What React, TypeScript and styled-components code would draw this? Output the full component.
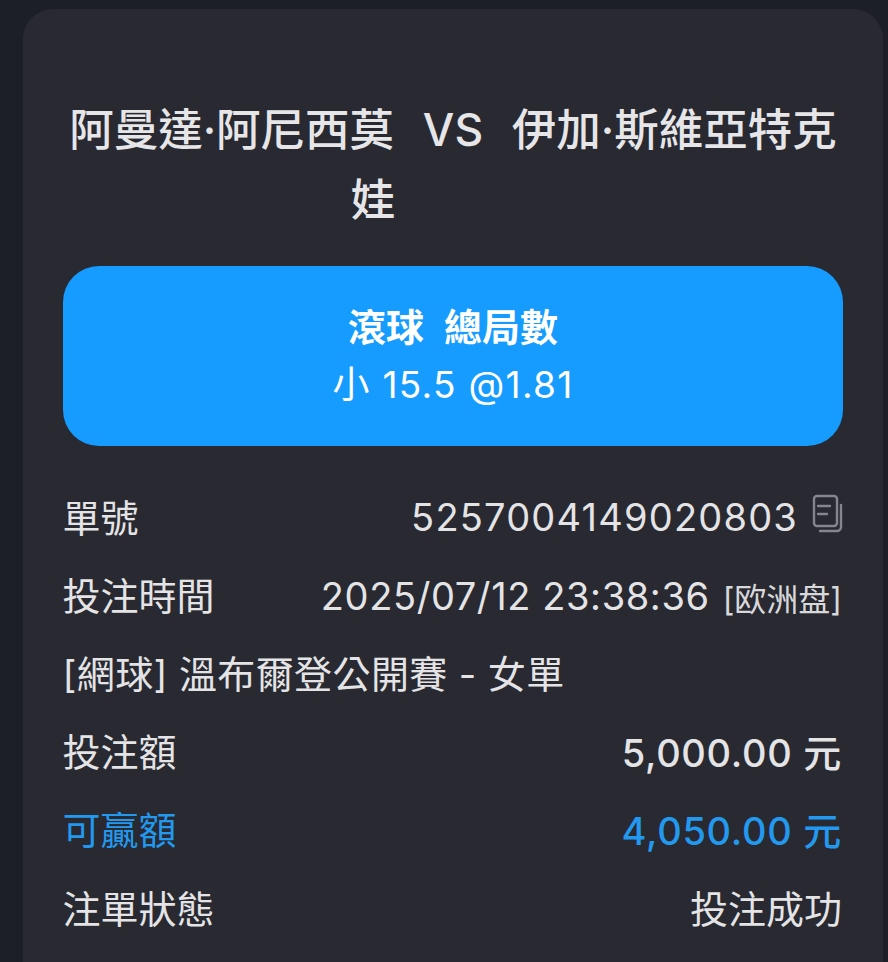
import React from 'react';
import styled, { createGlobalStyle } from 'styled-components';

const GlobalStyle = createGlobalStyle`
    html, body {
        margin: 0;
        padding: 0;
        background: #1d1f28;
        height: 962px;
        overflow: hidden;
    }
`;

const Page = styled.div`
    height: 962px;
    overflow: hidden;
    padding: 9px 5px 0 23px;
    box-sizing: border-box;
    font-family: Inter, 'Noto Sans CJK TC', sans-serif;
`;

const Card = styled.div`
    background: #282931;
    border-radius: 30px 30px 0 0;
    padding: 86px 40px 0;
    height: 1000px;
    box-sizing: border-box;
`;

const Title = styled.div`
    font-size: 44.5px;
    line-height: 70px;
    font-weight: 500;
    word-spacing: 2.5px;
    color: #e6e6e8;
    text-align: center;
    white-space: pre-wrap;
    margin: 0 -4px;
`;

const TitleTail = styled.span`
    padding-right: 160px;
`;

const BetBox = styled.div`
    margin-top: 31px;
    height: 180px;
    border-radius: 36px;
    background: #169bff;
    color: #fff;
    display: flex;
    flex-direction: column;
    align-items: center;
    justify-content: center;
`;

const BetMarket = styled.div`
    font-size: 38px;
    line-height: 58px;
    font-weight: 700;
    word-spacing: 1px;
    white-space: pre;
`;

const BetPick = styled.div`
    font-size: 37px;
    line-height: 58px;
    letter-spacing: 1.3px;
    white-space: pre;
`;

const Rows = styled.div`
    margin-top: 30px;
    display: flex;
    flex-direction: column;
`;

const Row = styled.div<{ $accent?: boolean }>`
    height: 78.2px;
    display: flex;
    align-items: center;
    justify-content: space-between;
    font-size: 38px;
    color: ${props => (props.$accent ? '#2299ee' : '#e4e4e6')};
    white-space: nowrap;
`;

const Label = styled.span<{ $spacing?: number }>`
    margin-left: -0.5px;
    letter-spacing: ${props => props.$spacing ?? 0}px;
`;

const Value = styled.div`
    display: flex;
    align-items: center;
    margin-right: 1px;
`;

const OrderNumber = styled.span`
    letter-spacing: 1.2px;
    margin-top: 4px;
`;

const BetTime = styled.span`
    letter-spacing: 0.6px;
    margin-top: 6px;
`;

const Amount = styled.span`
    font-weight: 450;
    letter-spacing: 0.7px;
    margin-top: 2px;
`;

const Note = styled.span`
    font-size: 32px;
    margin-left: 13px;
    margin-top: 8px;
    color: #d8d8db;
`;

const CopyIcon = styled.svg`
    width: 31px;
    height: 39px;
    margin-left: 14px;
    margin-right: -1px;
    margin-top: -3px;
    fill: none;
    stroke: #85868d;
    stroke-width: 2.4;
    stroke-linecap: round;
`;

function App() {
    return (
        <>
            <GlobalStyle />
            <Page>
                <Card>
                    <Title>阿曼達·阿尼西莫  VS  伊加·斯維亞特克<TitleTail>娃</TitleTail></Title>
                    <BetBox>
                        <BetMarket>滾球  總局數</BetMarket>
                        <BetPick>小 15.5 @1.81</BetPick>
                    </BetBox>
                    <Rows>
                        <Row>
                            <Label>單號</Label>
                            <Value>
                                <OrderNumber>5257004149020803</OrderNumber>
                                <CopyIcon viewBox="0 0 31 39">
                                    <rect x="2" y="2" width="23" height="30" rx="3" />
                                    <path d="M6 12h12M6 20h9" />
                                    <path d="M29 11v22a4 4 0 0 1-4 4H8" />
                                </CopyIcon>
                            </Value>
                        </Row>
                        <Row>
                            <Label>投注時間</Label>
                            <Value>
                                <BetTime>2025/07/12 23:38:36</BetTime>
                                <Note>[欧洲盘]</Note>
                            </Value>
                        </Row>
                        <Row>
                            <Label $spacing={0.4}>[網球] 溫布爾登公開賽 - 女單</Label>
                        </Row>
                        <Row>
                            <Label>投注額</Label>
                            <Value><Amount>5,000.00 元</Amount></Value>
                        </Row>
                        <Row $accent>
                            <Label>可贏額</Label>
                            <Value><Amount>4,050.00 元</Amount></Value>
                        </Row>
                        <Row>
                            <Label>注單狀態</Label>
                            <Value>投注成功</Value>
                        </Row>
                    </Rows>
                </Card>
            </Page>
        </>
    );
}

export default App;
